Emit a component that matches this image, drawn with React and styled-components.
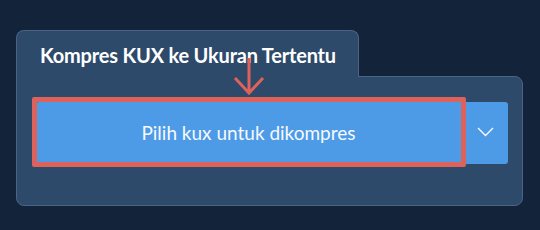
import React from "react";
import styled, { createGlobalStyle } from "styled-components";

const Global = createGlobalStyle`
  html, body { margin: 0; padding: 0; background: #12233a; }
  body { font-family: Lato, "Open Sans", sans-serif; }
`;

const Page = styled.div`
  position: relative;
  width: 540px;
  height: 230px;
  padding: 30px 0 0 16px;
  box-sizing: border-box;
`;

const Panel = styled.div`
  width: 507px;
  display: flex;
  flex-direction: column;
`;

const Tab = styled.div`
  position: relative;
  z-index: 1;
  width: 343px;
  height: 47px;
  box-sizing: border-box;
  margin-bottom: -1px;
  background: #2d4a6a;
  border: 1px solid #4b6384;
  border-bottom: none;
  border-radius: 8px 8px 0 0;
  padding: 12px 0 0 23px;
`;

const Title = styled.h2`
  margin: 0;
  font-family: Lato, sans-serif;
  font-weight: 700;
  font-size: 20px;
  line-height: 24px;
  color: #ffffff;
  letter-spacing: -0.2px;
`;

const Body = styled.div`
  height: 130px;
  box-sizing: border-box;
  background: #2d4a6a;
  border: 1px solid #4b6384;
  border-radius: 0 8px 8px 8px;
  padding: 25px 14px 0 19px;
`;

const SplitButton = styled.div`
  position: relative;
  display: flex;
  height: 62px;
  background: #4d9be6;
  border-radius: 3px;
`;

const MainPart = styled.div`
  position: relative;
  flex: 0 0 425px;
  display: flex;
  align-items: center;
  justify-content: center;
  color: #f6f9fd;
  font-family: Lato, sans-serif;
  font-size: 19px;
  font-weight: 400;
  padding-bottom: 1px;
  box-sizing: border-box;
`;

const DropPart = styled.div`
  flex: 1;
  display: flex;
  align-items: center;
  justify-content: center;
  padding-left: 2px;
  padding-bottom: 2px;
`;

const Highlight = styled.div`
  position: absolute;
  left: -4px;
  top: -5px;
  right: -5px;
  bottom: -3px;
  border: 5px solid #de625c;
  border-radius: 2px;
  pointer-events: none;
`;

const Arrow = styled.svg`
  position: absolute;
  left: 231px;
  top: 56px;
  z-index: 2;
`;

export default function App() {
  return (
    <>
      <Global />
      <Page>
        <Panel>
          <Tab>
            <Title>Kompres KUX ke Ukuran Tertentu</Title>
          </Tab>
          <Body>
            <SplitButton>
              <MainPart>
                Pilih kux untuk dikompres
                <Highlight />
              </MainPart>
              <DropPart>
                <svg width="17" height="10" viewBox="0 0 17 10">
                  <path d="M1 1 L8.5 8.5 L16 1" fill="none" stroke="#ffffff" strokeWidth="1.3" />
                </svg>
              </DropPart>
            </SplitButton>
          </Body>
        </Panel>
        <Arrow width="36" height="40" viewBox="0 0 36 40">
          <path d="M18 2 L18 37 M4 22 L18 37 L32 22" fill="none" stroke="#de625c" strokeWidth="3" />
        </Arrow>
      </Page>
    </>
  );
}
